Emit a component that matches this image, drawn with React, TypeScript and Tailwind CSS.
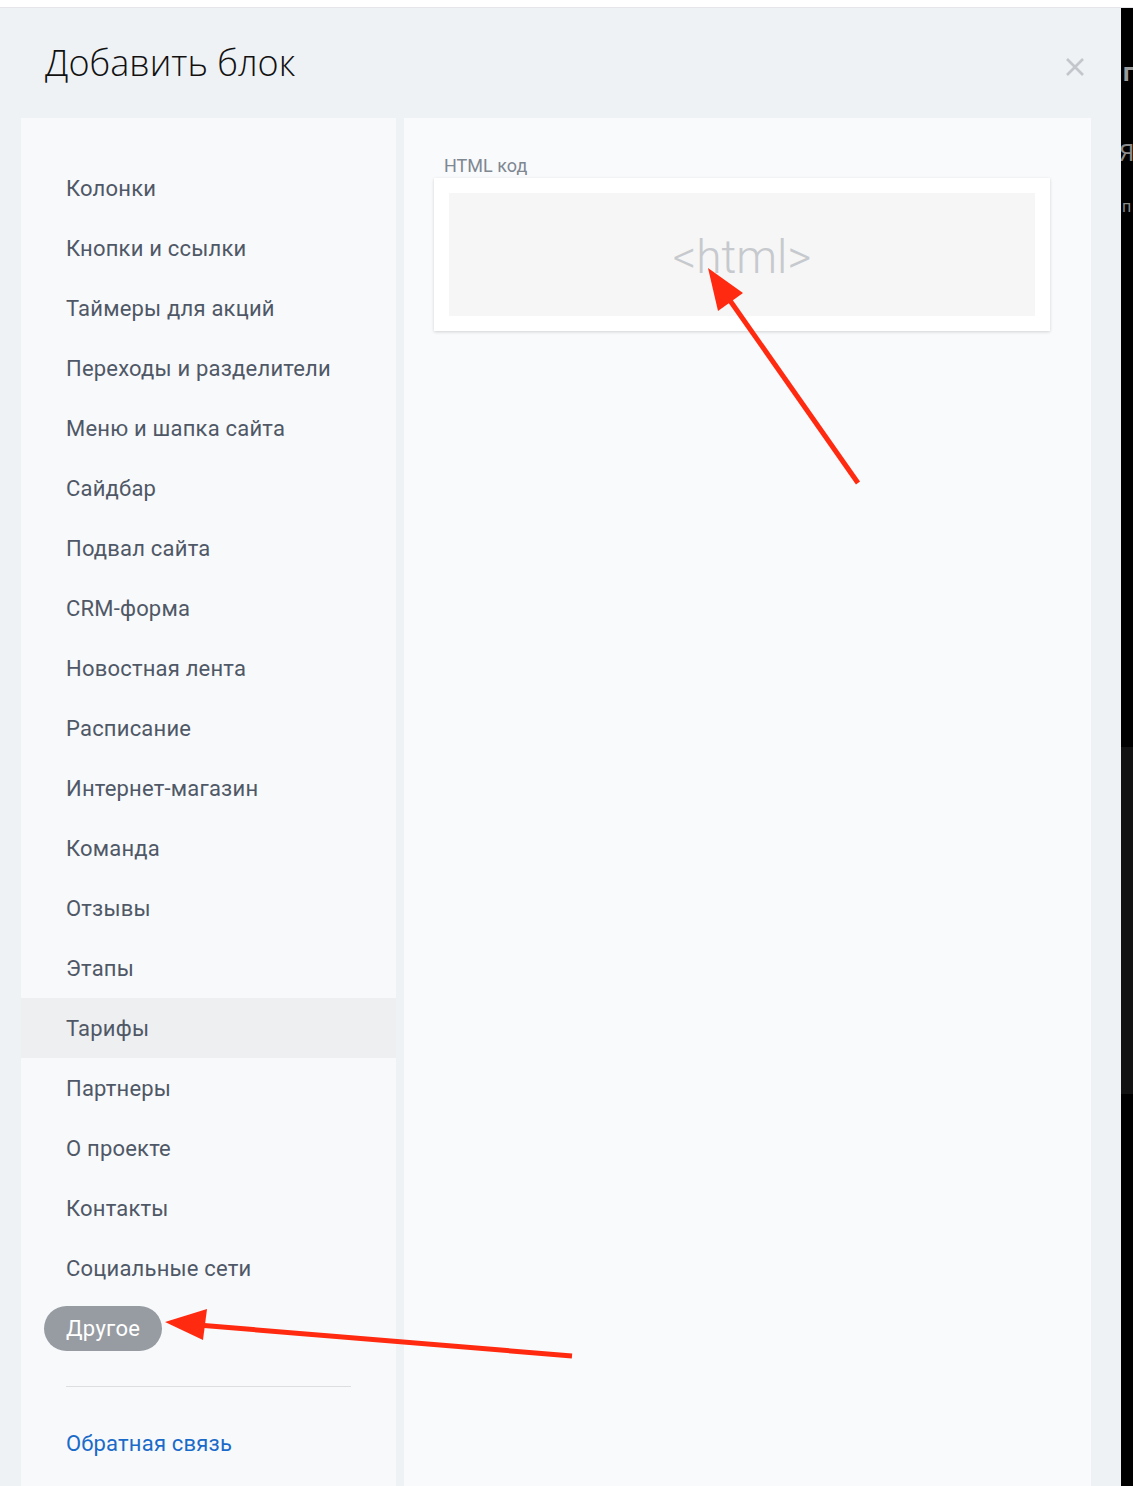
const items = [
  "Колонки",
  "Кнопки и ссылки",
  "Таймеры для акций",
  "Переходы и разделители",
  "Меню и шапка сайта",
  "Сайдбар",
  "Подвал сайта",
  "CRM-форма",
  "Новостная лента",
  "Расписание",
  "Интернет-магазин",
  "Команда",
  "Отзывы",
  "Этапы",
  "Тарифы",
  "Партнеры",
  "О проекте",
  "Контакты",
  "Социальные сети",
];

const Arrows = () => (
  <svg className="pointer-events-none absolute left-0 top-0" width="1133" height="1486">
    <line x1="858" y1="483" x2="724" y2="292" stroke="#ff2a0f" strokeWidth="5" />
    <polygon points="708,268 743,293 718,311" fill="#ff2a0f" />
    <line x1="572" y1="1356" x2="198" y2="1325" stroke="#ff2a0f" strokeWidth="5" />
    <polygon points="165,1322 207,1309 203,1340" fill="#ff2a0f" />
  </svg>
);

export default function App() {
  return (
    <div className="relative flex h-[1486px] w-[1133px] flex-col overflow-hidden bg-white font-['Roboto',sans-serif]">
      <div className="h-[8px] shrink-0 border-b border-[#e4e6e9] bg-white" />
      <div className="flex min-h-0 flex-1">
        {/* modal */}
        <div className="flex w-[1121px] flex-col bg-[#eff2f5]">
          <div className="flex h-[110px] shrink-0 items-start justify-between pl-[45px] pr-[36px]">
            <h1 className="mt-[31px] font-['Open_Sans',sans-serif] text-[36px] font-light leading-[48px] text-[#111]">
              Добавить блок
            </h1>
            <svg className="mt-[49px]" width="20" height="20" viewBox="0 0 20 20">
              <path d="M2 2 L18 18 M18 2 L2 18" stroke="#c3c6ca" strokeWidth="2.6" />
            </svg>
          </div>
          <div className="flex min-h-0 flex-1 gap-[8px] pl-[21px] pr-[30px]">
            {/* sidebar */}
            <div className="flex w-[375px] shrink-0 flex-col bg-[#f8f9fb] pt-[40px]">
              {items.map((t) => (
                <div
                  key={t}
                  className={
                    "flex h-[60px] items-center px-[45px] text-[22px] tracking-[0.2px] text-[#4f5866] " +
                    (t === "Тарифы" ? "bg-[#eeeff1]" : "")
                  }
                >
                  {t}
                </div>
              ))}
              <div className="flex h-[60px] items-center px-[23px]">
                <span className="flex h-[45px] items-center rounded-full bg-[#979ca3] px-[22px] text-[22px] tracking-[0.3px] text-white">
                  Другое
                </span>
              </div>
              <div className="mx-[45px] mt-[28px] border-t border-[#dcdfe2]" />
              <div className="px-[45px] pt-[40px] text-[22px] tracking-[0.2px] text-[#1a6bc9]">Обратная связь</div>
            </div>
            {/* content */}
            <div className="flex-1 bg-[#f9fafc] pl-[30px] pr-[40px] pt-[35px]">
              <div className="pl-[10px] text-[18px] leading-[25px] text-[#7f8791]">HTML код</div>
              <div className="w-[616px] bg-white p-[15px] shadow-[0_1px_3px_rgba(0,0,0,0.16)]">
                <div className="flex h-[123px] items-center justify-center bg-[#f6f6f6] pt-[5px] text-[46px] font-light text-[#c6c9cd]">
                  &lt;html&gt;
                </div>
              </div>
            </div>
          </div>
        </div>
        {/* background page strip */}
        <div className="relative flex-1 overflow-hidden bg-black">
          <div className="absolute left-0 top-[43px] h-[340px] w-[40px] text-[#8a8a8a]">
            <div className="absolute left-[2px] top-[8px] text-[26px] font-bold leading-none text-[#9a9a9a]">г</div>
            <div className="absolute left-[-2px] top-[90px] text-[24px] leading-none">Я</div>
            <div className="absolute left-[1px] top-[148px] text-[16px] leading-none">п</div>
          </div>
          <div className="absolute left-0 top-[739px] h-[347px] w-full bg-[#121212]" />
        </div>
      </div>
      <Arrows />
    </div>
  );
}
